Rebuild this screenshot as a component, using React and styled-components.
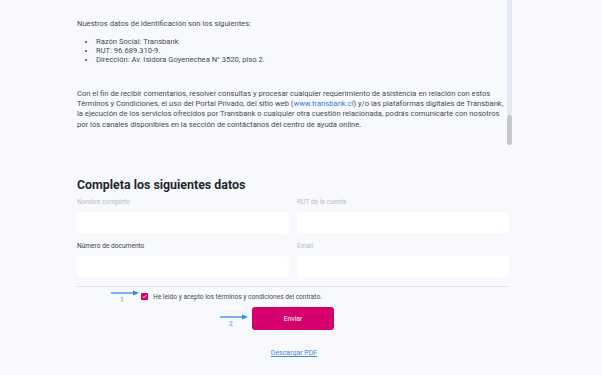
import React from 'react';
import styled, { createGlobalStyle } from 'styled-components';

const GlobalStyle = createGlobalStyle`
  html, body {
    margin: 0;
    padding: 0;
    background: #f8f9fd;
    font-family: Roboto, "Liberation Sans", Arial, sans-serif;
    color: #444a55;
  }
`;

const Page = styled.div`
  width: 602px;
  height: 375px;
  overflow: hidden;
  padding-left: 77px;
  box-sizing: border-box;
`;

const Column = styled.div`
  width: 432px;
`;

const TermsBox = styled.div`
  position: relative;
  height: 147px;
  padding-top: 19px;
  box-sizing: border-box;
  font-size: 7.6px;
  line-height: 10px;
`;

const Text = styled.p`
  margin: 0;
  width: 428px;
  white-space: nowrap;
`;

const List = styled.ul`
  margin: 8px 0 0;
  padding-left: 19px;
  line-height: 9px;
  list-style: disc;
`;

const Paragraph = styled(Text)`
  margin-top: 25px;
  line-height: 10.2px;
`;

const Link = styled.a`
  color: #2f7de1;
  text-decoration: none;
`;

const ScrollTrack = styled.div`
  position: absolute;
  top: 0;
  left: 430px;
  width: 5px;
  height: 145px;
  background: #e6ebf3;
  border-radius: 0 0 3px 3px;
`;

const ScrollThumb = styled.div`
  position: absolute;
  bottom: 0;
  left: 0;
  width: 5px;
  height: 30px;
  background: #c6c7cb;
  border-radius: 3px;
`;

const Heading = styled.h2`
  margin: 30px 0 0;
  font-size: 12.4px;
  line-height: 16px;
  font-weight: 700;
  color: #23262d;
`;

const FormGrid = styled.div`
  display: grid;
  grid-template-columns: 1fr 1fr;
  column-gap: 8px;
  row-gap: 9px;
  margin-top: 5px;
`;

const Field = styled.div`
  display: flex;
  flex-direction: column;
  gap: 6px;
`;

const Label = styled.label`
  font-size: 6.6px;
  line-height: 8px;
  color: ${p => (p.$dark ? '#3a3f48' : '#b9bcc3')};
`;

const Input = styled.input`
  height: 21px;
  border: none;
  border-radius: 2px;
  background: #ffffff;
  box-sizing: border-box;
  outline: none;
`;

const Divider = styled.hr`
  margin: 9px 0 0;
  border: none;
  border-top: 1px solid #dfe2e9;
`;

const CheckRow = styled.div`
  position: relative;
  display: flex;
  align-items: center;
  gap: 5px;
  margin: 5px 0 0 64px;
  height: 9px;
  font-size: 6.6px;
  color: #454a54;
`;

const CheckBox = styled.span`
  width: 7px;
  height: 7px;
  border-radius: 1px;
  background: #d5006c;
  display: flex;
  align-items: center;
  justify-content: center;
`;

const ButtonRow = styled.div`
  position: relative;
  display: flex;
  justify-content: center;
  margin-top: 6px;
`;

const SubmitButton = styled.button`
  width: 82px;
  height: 23px;
  border: none;
  border-radius: 3px;
  background: #d5006c;
  color: #ffffff;
  font-family: inherit;
  font-size: 6.8px;
`;

const Footer = styled.div`
  display: flex;
  justify-content: center;
  margin-top: 19px;
  padding-left: 2px;
`;

const PdfLink = styled.a`
  font-size: 7px;
  color: #4a86d8;
  text-decoration: underline;
`;

const Marker = styled.div`
  position: absolute;
  top: ${p => p.$top}px;
  left: ${p => p.$left}px;
  width: 29px;
  height: 14px;

  svg {
    display: block;
  }
`;

const MarkerNumber = styled.span`
  position: absolute;
  top: 6px;
  left: 9px;
  font-size: 6.5px;
  line-height: 8px;
  color: #3a92f0;
`;

function Arrow({ top, left, n }) {
  return (
    <Marker $top={top} $left={left}>
      <svg width="29" height="6" viewBox="0 0 29 6">
        <line x1="0" y1="3" x2="23" y2="3" stroke="#2f8cf0" strokeWidth="1.3" />
        <path d="M22 0.6 L28 3 L22 5.4 Z" fill="#2f8cf0" />
      </svg>
      <MarkerNumber>{n}</MarkerNumber>
    </Marker>
  );
}

export default function App() {
  return (
    <Page>
      <GlobalStyle />
      <Column>
        <TermsBox>
          <Text>Nuestros datos de identificación son los siguientes:</Text>
          <List>
            <li>Razón Social: Transbank</li>
            <li>RUT: 96.689.310-9.</li>
            <li>Dirección: Av. Isidora Goyenechea N° 3520, piso 2.</li>
          </List>
          <Paragraph>
            Con el fin de recibir comentarios, resolver consultas y procesar cualquier requerimiento de asistencia en relación con estos
            <br />
            Términos y Condiciones, el uso del Portal Privado, del sitio web (<Link href="#">www.transbank.cl</Link>) y/o las plataformas digitales de Transbank,
            <br />
            la ejecución de los servicios ofrecidos por Transbank o cualquier otra cuestión relacionada, podrás comunicarte con nosotros
            <br />
            por los canales disponibles en la sección de contáctanos del centro de ayuda online.
          </Paragraph>
          <ScrollTrack>
            <ScrollThumb />
          </ScrollTrack>
        </TermsBox>

        <Heading>Completa los siguientes datos</Heading>
        <FormGrid>
          <Field>
            <Label>Nombre completo</Label>
            <Input />
          </Field>
          <Field>
            <Label>RUT de la cuenta</Label>
            <Input />
          </Field>
          <Field>
            <Label $dark>Número de documento</Label>
            <Input />
          </Field>
          <Field>
            <Label>Email</Label>
            <Input />
          </Field>
        </FormGrid>
        <Divider />

        <CheckRow>
          <Arrow top={-2} left={-30} n="1" />
          <CheckBox>
            <svg width="5" height="5" viewBox="0 0 5 5">
              <path d="M0.7 2.6 L2 3.8 L4.3 1.2" stroke="#fff" strokeWidth="0.9" fill="none" />
            </svg>
          </CheckBox>
          He leído y acepto los términos y condiciones del contrato.
        </CheckRow>

        <ButtonRow>
          <Arrow top={7} left={143} n="2" />
          <SubmitButton>Enviar</SubmitButton>
        </ButtonRow>

        <Footer>
          <PdfLink href="#">Descargar PDF</PdfLink>
        </Footer>
      </Column>
    </Page>
  );
}
